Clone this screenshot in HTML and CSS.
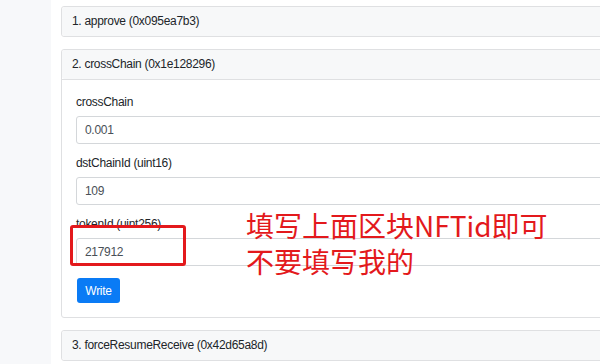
FILE: index.html
```html
<!DOCTYPE html>
<html lang="en">
<head>
    <meta charset="UTF-8">
    <meta name="viewport" content="width=device-width, initial-scale=1.0">
    <title>Write Contract</title>
    <link rel="stylesheet" href="styles.css">
</head>
<body>

    <div class="sidebar"></div>

    <div class="main">
        <div class="card">
            <div class="card-header">1. approve (0x095ea7b3)</div>
        </div>

        <div class="card">
            <div class="card-header">2. crossChain (0x1e128296)</div>
            <div class="card-body">
                <div class="form-group">
                    <label>crossChain</label>
                    <input class="form-input" type="text" value="0.001">
                </div>
                <div class="form-group">
                    <label>dstChainId (uint16)</label>
                    <input class="form-input" type="text" value="109">
                </div>
                <div class="form-group">
                    <label>tokenId (uint256)</label>
                    <input class="form-input" type="text" value="217912">
                </div>
                <button class="write-btn">Write</button>
            </div>
        </div>

        <div class="card">
            <div class="card-header">3. forceResumeReceive (0x42d65a8d)</div>
        </div>
    </div>

    <!-- annotation drawn over the screenshot -->
    <div class="mark-box"></div>
    <div class="mark-note">填写上面区块NFTid即可<br>不要填写我的</div>

</body>
</html>
```

FILE: styles.css
```css
body {
    margin: 0;
    width: 600px;
    height: 364px;
    display: flex;
    overflow: hidden;
    font-family: "Liberation Sans", Arial, sans-serif;
    font-size: 12px;
    letter-spacing: -0.3px;
    color: #212529;
    background-color: white;
    position: relative;
}
.sidebar {
    width: 51px;
    flex: 0 0 51px;
    background-color: #f7f8fa;
}
.main {
    flex: 1;
    padding: 6px 0 0 10px;
    overflow: hidden;
}
.card {
    width: 620px;
    border: 1px solid #dfe0e2;
    border-radius: 3px;
    background-color: white;
    margin-bottom: 12px;
}
.card-header {
    background-color: #f7f8f9;
    padding: 7px 10px;
    line-height: 15px;
    border-radius: 3px;
}
.card-body {
    border-top: 1px solid #dfe0e2;
    padding: 14px;
}
.form-group {
    display: flex;
    flex-direction: column;
    margin-bottom: 11px;
}
.form-group label {
    line-height: 16px;
    margin-bottom: 6px;
}
.form-input {
    height: 28px;
    box-sizing: border-box;
    border: 1px solid #d4d7da;
    border-radius: 3px;
    padding: 0 8px;
    font-family: inherit;
    font-size: 12px;
    letter-spacing: -0.3px;
    color: #495057;
}
.write-btn {
    margin-top: 1px;
    margin-left: 1px;
    width: 43px;
    height: 25px;
    padding: 0;
    border: none;
    border-radius: 3px;
    background-color: #0a7bf5;
    color: white;
    font-family: inherit;
    font-size: 12px;
    letter-spacing: -0.3px;
}
.mark-box {
    position: absolute;
    left: 70px;
    top: 225px;
    width: 110px;
    height: 35px;
    border: 3px solid #e3191c;
    border-radius: 3px;
}
.mark-note {
    position: absolute;
    left: 246px;
    top: 207px;
    font-family: "Noto Sans CJK SC", sans-serif;
    font-size: 28px;
    line-height: 36px;
    letter-spacing: 0;
    color: #e3191c;
}
```
